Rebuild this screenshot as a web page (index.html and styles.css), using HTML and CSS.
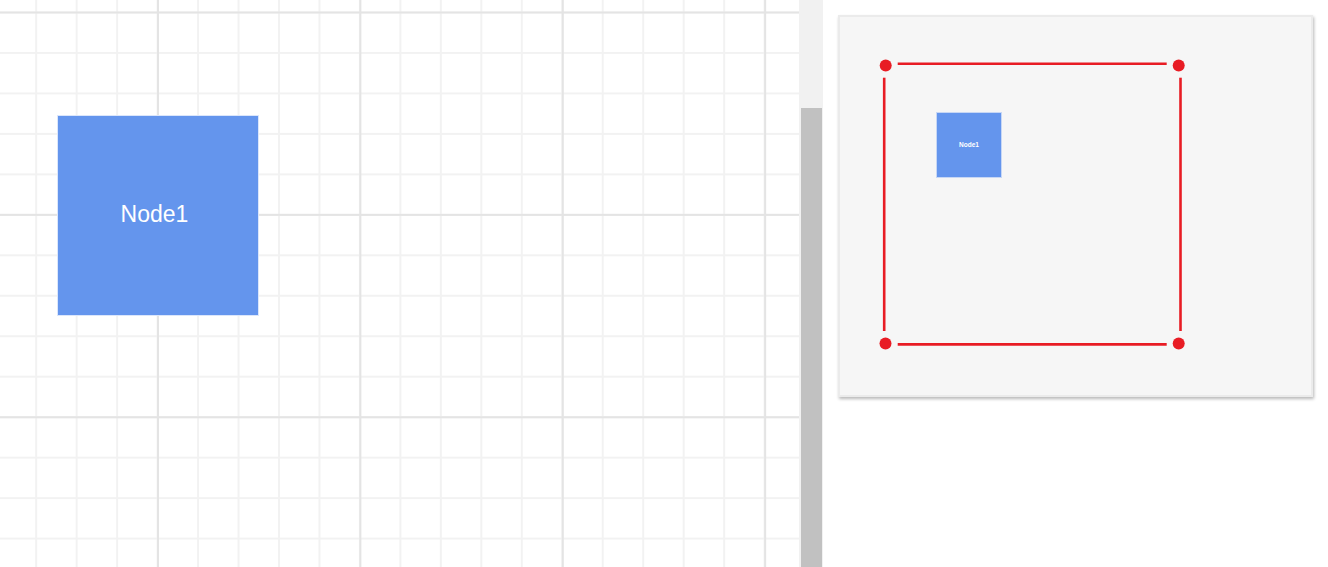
FILE: index.html
```html
<!DOCTYPE html>
<html>
<head>
<meta charset="utf-8">
<link rel="stylesheet" href="styles.css">
</head>
<body>
<div class="app">
  <div class="canvas">
    <div class="node">Node1</div>
  </div>
  <div class="scrollbar"><div class="thumb"></div></div>
  <div class="side">
    <div class="overview">
      <div class="mini-node">Node1</div>
      <svg class="viewport" width="471" height="378" viewBox="0 0 471 378">
        <g stroke="#e81c24" stroke-width="2.6" fill="none">
          <line x1="57.7" y1="46.8" x2="326.7" y2="46.8"/>
          <line x1="57.7" y1="327.4" x2="326.7" y2="327.4"/>
          <line x1="44.2" y1="60.7" x2="44.2" y2="314"/>
          <line x1="340.5" y1="60.7" x2="340.5" y2="314"/>
        </g>
        <g fill="#e81c24">
          <circle cx="45.7" cy="48.6" r="6"/>
          <circle cx="338.7" cy="48.4" r="6"/>
          <circle cx="45.5" cy="326.6" r="6"/>
          <circle cx="338.7" cy="326.4" r="6"/>
        </g>
      </svg>
    </div>
  </div>
</div>
</body>
</html>
```
FILE: styles.css
```css
* { box-sizing: border-box; }
html, body { margin: 0; padding: 0; background: #fff; }
body { font-family: "Liberation Sans", Arial, sans-serif; }
.app {
  display: flex;
  width: 1328px;
  height: 567px;
  overflow: hidden;
}
.canvas {
  position: relative;
  width: 799px;
  height: 567px;
  flex: none;
  background-color: #fff;
  background-image:
    linear-gradient(to right, #e4e4e4 2px, transparent 2px),
    linear-gradient(to bottom, #e4e4e4 2px, transparent 2px),
    linear-gradient(to right, #f2f2f2 1.5px, transparent 1.5px),
    linear-gradient(to bottom, #f2f2f2 1.5px, transparent 1.5px);
  background-size: 202.4px 202.4px, 202.4px 202.4px, 40.48px 40.48px, 40.48px 40.48px;
  background-position: 157px 0, 0 11.5px, 35.2px 0, 0 11.5px;
}
.node {
  position: absolute;
  left: 57px;
  top: 115px;
  width: 202px;
  height: 201px;
  background: #6495ed;
  border: 1px solid #dbe6fb;
  color: #fff;
  font-size: 23px;
  display: flex;
  align-items: center;
  justify-content: center;
  padding-right: 7px;
  padding-bottom: 3px;
}
.scrollbar {
  flex: none;
  width: 24px;
  height: 567px;
  background: #f1f1f1;
  padding: 108px 1px 0 2px;
}
.thumb {
  width: 100%;
  height: 100%;
  background: #c1c1c1;
}
.side {
  flex: 1;
  padding: 15px 0 0 15px;
}
.overview {
  position: relative;
  width: 475px;
  height: 382px;
  background: #f6f6f6;
  border: 2px solid #ebebeb;
  box-shadow: 1px 2px 3px rgba(0,0,0,0.28);
}
.mini-node {
  position: absolute;
  left: 96px;
  top: 95px;
  width: 66px;
  height: 66px;
  background: #6495ed;
  border: 1px solid #c7d7f5;
  color: #fff;
  font-size: 6.5px;
  font-weight: bold;
  display: flex;
  align-items: center;
  justify-content: center;
  padding-bottom: 2px;
}
.viewport {
  position: absolute;
  left: 0;
  top: 0;
}
```
